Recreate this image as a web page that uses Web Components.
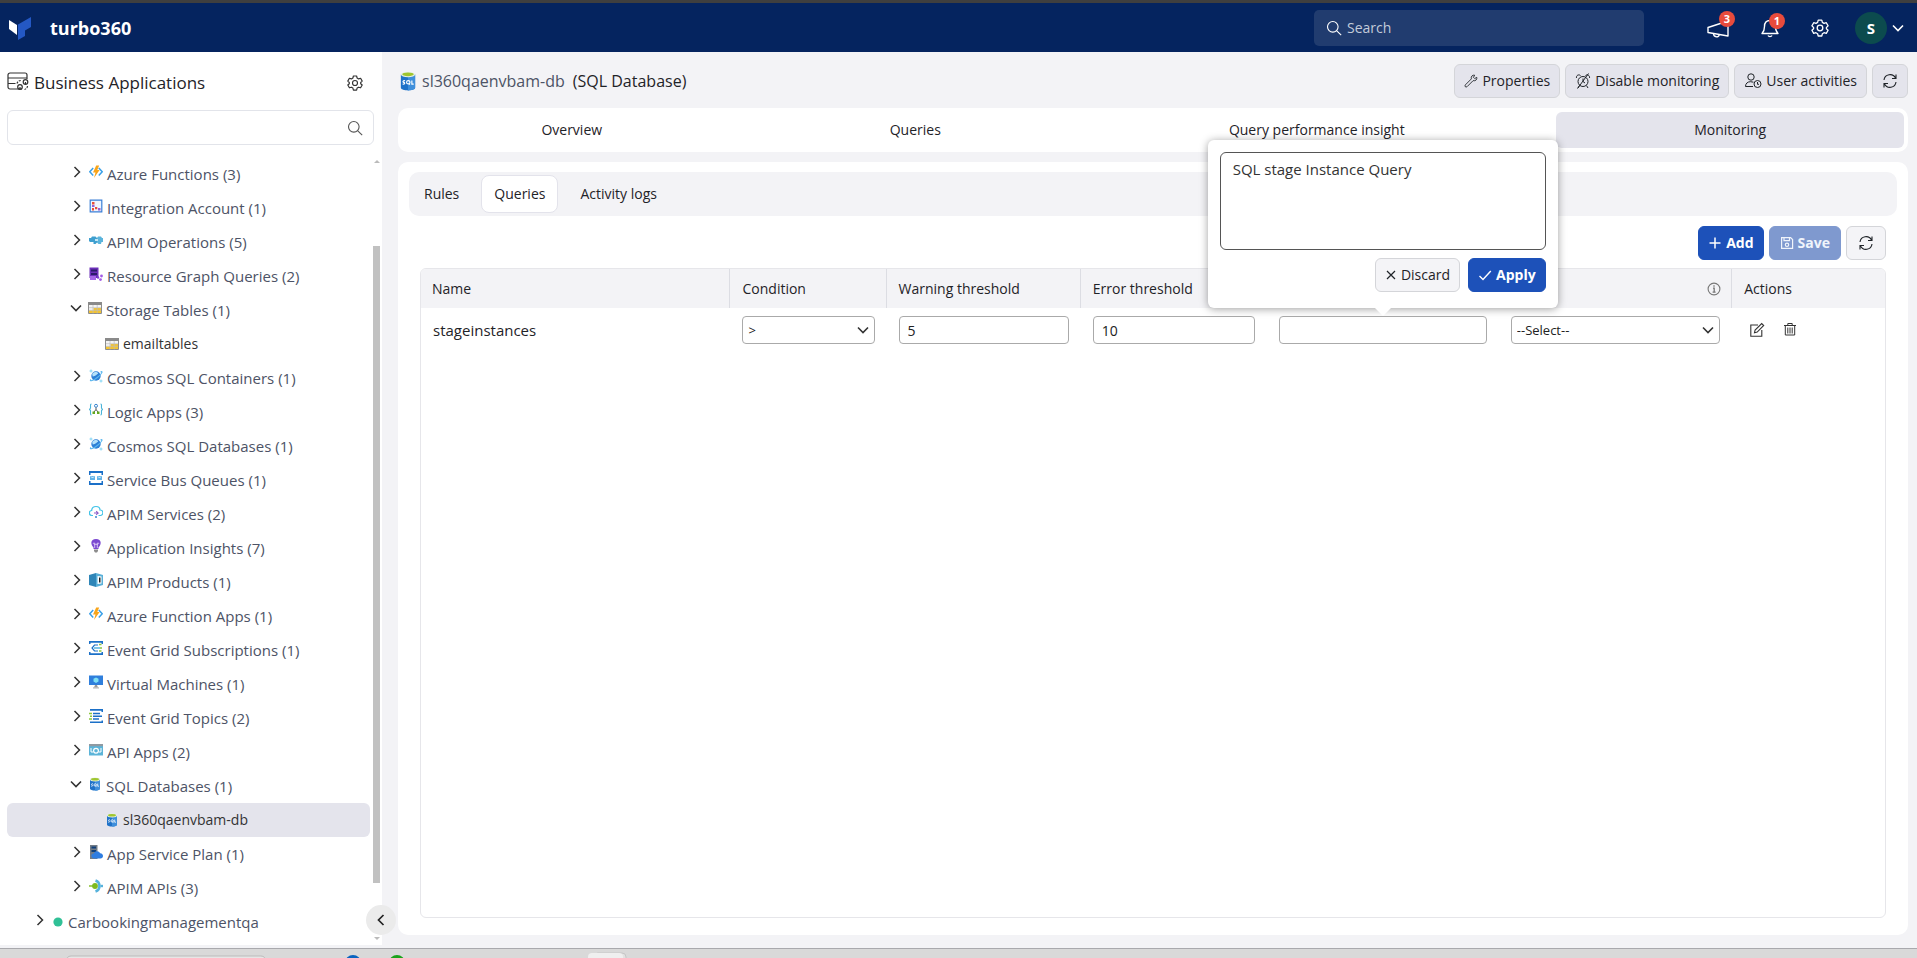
<!DOCTYPE html>
<html lang="en">
<head>
<meta charset="utf-8">
<title>turbo360 - Business Applications</title>
<style>
html, body { margin: 0; height: 100%; }
body { font-family: "Open Sans", "Noto Sans", sans-serif; font-size: 14px; line-height: 20px; color: #1f2328; background: #f3f3f6; overflow: hidden; }
</style>
</head>
<body>
<app-shell></app-shell>
<script>
const ICONS = {
  right: [16, '<path d="M5.5 3l5 5-5 5" fill="none" stroke="currentColor" stroke-width="1.5"/>'],
  down: [16, '<path d="M3 5.5l5 5 5-5" fill="none" stroke="currentColor" stroke-width="1.6"/>'],
  left: [16, '<path d="M10.5 3L5.5 8l5 5" fill="none" stroke="currentColor" stroke-width="1.7"/>'],
  search: [16, '<g fill="none" stroke="currentColor" stroke-width="1.1"><circle cx="6.8" cy="6.8" r="5.3"/><path d="M10.8 10.8l4.4 4.4"/></g>'],
  gear: [16, '<g fill="none" stroke="currentColor" stroke-width="1.15" stroke-linejoin="round"><path d="M6.4 1h3.2l.5 2 1.500.9 2-.6 1.600 2.800L13.700 7.500v1.200l1.500 1.300-1.600 2.800-2-.6-1.500.9-.5 2H6.400l-.5-2-1.500-.9-2 .6L.8 10l1.500-1.300V7.500L.8 6.100l1.600-2.800 2 .6L5.900 3z"/><circle cx="8" cy="8" r="2.500"/></g>'],
  apps: [22, '<g fill="none" stroke="#333" stroke-width="1.2"><path d="M15 17H3a2 2 0 0 1-2-2V3a2 2 0 0 1 2-2h15a2 2 0 0 1 2 2v4M1 6h19M1 11.500h7.500"/><circle cx="13" cy="15" r="2.300"/><circle cx="18.500" cy="10" r="2.300"/><path d="M10 11.500a4 4 0 0 1 4-3M20.500 14a4 4 0 0 1-3 3.500" stroke-dasharray="2 1"/><path d="M13 15v2M18.500 10v2" /></g>'],
  logo: [24, '<path d="M1 4l8 5v10L1 13z" fill="#fff"/><path d="M10 8.500L23 1v10l-6 3.500V20l-7 4z" fill="#2458c4"/>'],
  horn: [24, '<g fill="none" stroke="currentColor" stroke-width="1.400" stroke-linejoin="round"><path d="M2 11.500L22 5v15l-20-3.500z"/><path d="M7.500 17.500c0 4 5.500 4.500 5.800 1"/></g>'],
  bell: [20, '<g fill="none" stroke="currentColor" stroke-width="1.400" stroke-linejoin="round"><path d="M10 2.500c-4 0-5.500 3-5.500 6 0 4-1 5.500-2.500 7h16c-1.500-1.500-2.500-3-2.500-7 0-3-1.500-6-5.500-6z"/><path d="M8 17.500c.8 1.500 3.200 1.500 4 0"/></g>'],
  wrench: [16, '<path d="M14.600 3.800l-2.400 1.400-1.400-1.400L12.200 1.400C9.800.8 7.600 2.800 8.400 5.600L1.600 12.400c-1.400 1.600.4 3.400 2 2l6.800-6.800c2.800.8 4.800-1.400 4.200-3.800z" fill="none" stroke="currentColor" stroke-width="1"/>'],
  alarm: [16, '<g fill="none" stroke="currentColor" stroke-width="1"><circle cx="8" cy="8.500" r="5"/><path d="M8 5.500v3l2 1.500M4.500 12.500L3 15M11.500 12.500L13 15M1.500 5C1 2.500 3.500 1 5.500 2.500M14.500 5c.5-2.500-2-4-4-2.500M13.500.5l-11 15" /></g>'],
  user: [18, '<g fill="none" stroke="currentColor" stroke-width="1"><circle cx="7" cy="5" r="3.200"/><path d="M9 14.500H1.500c0-3 2-4.800 5-4.800l3 .5"/><circle cx="13.500" cy="12" r="3.500"/><path d="M13.500 10v2.300h1.500"/></g>'],
  refresh: [16, '<g fill="none" stroke="currentColor" stroke-width="1.100"><path d="M2 7a6.100 6.100 0 0 1 11.500-2M14 9a6.100 6.100 0 0 1-11.500 2M14 1.500v4h-4M2 14.500v-4h4"/></g>'],
  plus: [14, '<path d="M7 1.500v11M1.500 7h11" stroke="currentColor" stroke-width="1.500"/>'],
  save: [14, '<g fill="none" stroke="currentColor" stroke-width="1.200"><path d="M1.600 1.600h9l2 2v8.800h-11z"/><path d="M4 1.600v3h5.500v-3"/><circle cx="7" cy="8.800" r="1.700"/></g>'],
  close: [12, '<path d="M2 2l8 8M10 2l-8 8" stroke="currentColor" stroke-width="1.200"/>'],
  check: [14, '<path d="M1.500 8l3.500 3.500L12.800 3" fill="none" stroke="currentColor" stroke-width="1.400"/>'],
  info: [14, '<circle cx="7" cy="7" r="5.900" fill="none" stroke="#777" stroke-width="1.100"/><path d="M7 3.200v1.600M6 6.200h1.200v4M5.600 10.200h3" stroke="#777" stroke-width="1.300" fill="none"/>'],
  edit: [16, '<g fill="none" stroke="currentColor" stroke-width="1.100"><path d="M9 3H1.800v11.200h11V8"/><path d="M5.500 10.700l.6-2.700 6.600-6.500 2 2-6.500 6.600z"/></g>'],
  trash: [14, '<g fill="none" stroke="currentColor" stroke-width="1"><path d="M1 3.500h12M4.800 3.500v-2h4.400v2M2.300 3.500v9.500h9.400V3.500M4.800 5.500v6M7 5.500v6M9.200 5.500v6"/></g>'],
  sql: [14, '<path d="M2 2.500v9.300c0 2.400 10 2.400 10 0V2.500z" fill="#1f72c8"/><path d="M7 4v9.600c3 0 5-.8 5-1.800V2.500z" fill="#3f8fdb"/><ellipse cx="7" cy="2.500" rx="5" ry="1.900" fill="#e6f0e0"/><ellipse cx="7" cy="2.300" rx="4" ry="1.300" fill="#9fc52e"/><g fill="none" stroke="#fff" stroke-width=".8"><path d="M5 6.800c-1.600-.4-1.900.9-1 1.200 1.200.3.800 1.500-.8 1.100M9.700 6.600v2.600H11"/><circle cx="7.200" cy="7.900" r="1.200"/><path d="M7.500 8.600l.8 1"/></g>'],
  func: [14, '<path d="M4.200 3L.8 6.800l3.400 3.700M9.800 3l3.400 3.800-3.400 3.700" fill="none" stroke="#3aa0e8" stroke-width="1.500"/><path d="M7.200.5h3L8.300 5h2.300L5 13l1.500-5.500H4z" fill="#f9a51a"/>'],
  integ: [14, '<path d="M1.200 1.200h11.600v11.600H1.200z" fill="#eef5ff" stroke="#3b7fd6" stroke-width="1.200"/><path d="M3 3h2.500v2.500H3zM6 8h2.300v2.300H6zM3 9h2v2.500H3z" fill="#e8503a"/><path d="M3 6h2.500v2H3zM9 9h2.500v2.500H9z" fill="#9a5bd0"/>'],
  ops: [14, '<path d="M0 5h2l1-1.500h3.500L8 5v4.500L6.500 11h-2v-2H1L0 8z" fill="#3f9fcf"/><path d="M14 5h-1l-1-1.500H9L8 5v4.500L9.500 11H12l.5-2H14z" fill="#5bb4dc"/><path d="M6 6h3v2H6z" fill="#c3e5f3"/>'],
  graph: [14, '<path d="M.5.5h9v10.500h-9z" fill="#6b2fb8"/><path d="M2 2.500h6v2H2zM2 6h6v2H2z" fill="#2c1a6b"/><path d="M1 9h6v4H1z" fill="#a668e8"/><circle cx="12.500" cy="9" r="1.400" fill="#a35be6"/><circle cx="9" cy="10.500" r="1.200" fill="#7d3ccf"/><circle cx="11.500" cy="12.600" r="1.400" fill="#a35be6"/>'],
  table: [14, '<path d="M.5 1.500h13v11H.5z" fill="#f4f4f4" stroke="#8d8d8d"/><path d="M0 1h14v3H0z" fill="#8a8a8a"/><path d="M5.500 7h7.500v5H1V9.500h4.500z" fill="#f4c430"/><path d="M1 6.700h12M1 9.300h12M5 4v8.500M9.200 4v8.500" stroke="#bbb" stroke-width=".7"/>'],
  cosmos: [14, '<circle cx="7" cy="7" r="4.700" fill="#2d7fd6"/><path d="M3.200 5c2-2.500 5-2.500 6-.5-1.500 1-2.500 2.500-5.500 3z" fill="#b5e2fa"/><path d="M2 10.500C-.5 13 5 11.500 9 8S14.500 1.500 11.500 3" fill="none" stroke="#58b6ee" stroke-width="1.100"/><path d="M2 .5v3M.5 2h3M12 10.500v3M10.500 12h3" stroke="#7ad3f4" stroke-width=".9"/>'],
  logic: [14, '<path d="M2.500 1c-1.500 0-.8 2-1 4L.5 6.500l1 1c.2 2-.5 4.500 1 4.500M11.500 1c1.500 0 .8 2 1 4l1 1.500-1 1c-.2 2 .5 4.500-1 4.500" fill="none" stroke="#4ab3d8" stroke-width="1.100"/><circle cx="7" cy="2.800" r="1.500" fill="none" stroke="#3a86d0"/><path d="M7 4.500v2L5 9M7 6.500L9 9" fill="none" stroke="#444" stroke-width=".9"/><path d="M3.500 8.500h2.500v2.500H3.500zM8 8.500h2.500v2.500H8z" fill="#62a81e"/>'],
  bus: [14, '<path d="M0 0h14v4h-1.500V2h-11v2H0zM0 14h14v-4h-1.500v2h-11v-2H0z" fill="#1b70c8"/><path d="M1 5h5v4H1zM8 5h5v4H8z" fill="#63b4e8"/><path d="M2 5.500l1.500 1.500L5 5.500M9 5.500l1.500 1.500L12 5.500" fill="none" stroke="#fff" stroke-width=".8"/>'],
  cloud: [14, '<path d="M4 10.500H3a2.500 2.500 0 0 1-.3-5C2.800 3 4.500 1.500 7 1.500s4 1.500 4 3.500a2.700 2.700 0 0 1 .3 5.500H9.500" fill="none" stroke="#41c3e8" stroke-width="1.200"/><path d="M5 8h4L7.200 6.200M9 8l-1.800 2" fill="none" stroke="#8a5bc8" stroke-width="1.100"/><circle cx="7" cy="12" r="1" fill="#3a86d0"/>'],
  bulb: [14, '<path d="M7 0c6 0 5.500 5.500 2.500 8.500V10h-5V8.500C1.500 5.500 1 0 7 0z" fill="#7b48d0"/><path d="M5 3.500c-1.500 1 0 2 .8 1.500M9 3.500c1.500 1 0 2-.8 1.500M5.700 4v5M8.300 4v5M5.700 5.300h2.600" stroke="#e8dafa" fill="none" stroke-width=".8"/><path d="M5 10.500h4V12L8 13.500H6L5 12z" fill="#8c8c8c"/>'],
  product: [14, '<path d="M0 2l7-2v14L0 12z" fill="#2f86b8"/><path d="M7 0l7 2v10l-7 2z" fill="#5ab0d8"/><path d="M8.500 3l4 .5v7l-4 .5z" fill="#fff"/><path d="M10 4.500h1.500v5H10z" fill="#222"/>'],
  grid: [14, '<path d="M0 0h14v3h-1.500V1.700h-11V3H0zM0 14h14v-3h-1.500v1.300h-11V11H0z" fill="#1b70c8"/><path d="M9 4H5.500L3 7l2.500 3H9" fill="none" stroke="#1b70c8" stroke-width="1.200"/><path d="M5 7h6" stroke="#2ba0d8" stroke-width="1.200"/><path d="M10 3.500h2.500M11 7h2M10 10h2.500" stroke="#8cc63f" stroke-width="1.400"/>'],
  vm: [14, '<path d="M0 .5h14V10H0z" fill="#2f7fdc"/><path d="M7 2.500l2.500 1.300v2.700L7 8 4.500 6.500V3.800z" fill="#7fe0f4"/><path d="M6 10h2l1 2.500H5z" fill="#9a9a9a"/><path d="M4 12.300h6v1.200H4z" fill="#b5b5b5"/>'],
  topic: [14, '<path d="M1 0h13v3h-1.500V1.700H1zM1 14h13v-2.500h-1.500v1H1z" fill="#1b70c8"/><path d="M4 4.500h7M4 7.200h9M4 10h6" stroke="#1b70c8" stroke-width="1.400"/><path d="M0 4.500h3M1 7.200h2M0 10h3" stroke="#8cc63f" stroke-width="1.400"/>'],
  api: [14, '<path d="M0 1h14v11.500H0z" fill="#5cb4d8"/><path d="M0 1h14v2.200H0z" fill="#8f9aa2"/><circle cx="7" cy="7.800" r="2.400" fill="none" stroke="#fff" stroke-width="1.200"/><path d="M2 5v4h2M12 5v4h-2" fill="none" stroke="#fff"/>'],
  plan: [14, '<path d="M1 0h7.500v14H1z" fill="#737c86"/><path d="M2.500 1.500H7v2H2.500zM2.500 5H7v2H2.500z" fill="#0f3f7a"/><path d="M5 13.500a2.500 2.500 0 0 1-.2-5 3.500 3.500 0 0 1 6.400-.2c2 .2 2.800 1.500 2.800 2.700 0 1.300-1 2.500-2.500 2.500z" fill="#2f7de0"/>'],
  apis: [14, '<path d="M6.500 1.500a5.800 5.800 0 0 1 0 11" fill="none" stroke="#56b2dc" stroke-width="2.600"/><path d="M11.500 5.800H14v2.400h-2.500z" fill="#56b2dc"/><circle cx="6" cy="7" r="2.900" fill="#7fba1e"/><path d="M0 6.300h4v1.400H0z" fill="#7fba1e"/>'],
  dot: [14, '<circle cx="7" cy="7" r="4.600" fill="#30c096"/>'],
};

function define(name, markup) {
  const template = document.createElement('template');
  customElements.define(name, class extends HTMLElement {
    connectedCallback() {
      if (this.shadowRoot) return;
      template.innerHTML = typeof markup === 'function' ? markup(this) : markup;
      this.attachShadow({ mode: 'open' }).append(template.content.cloneNode(true));
    }
  });
}

define('ui-icon', el => {
  const [box, body] = ICONS[el.getAttribute('name')];
  const size = el.getAttribute('size') || box;
  return `<style>:host{display:inline-flex;flex:none;width:${size}px;height:${size}px}svg{display:block;width:100%;height:100%}</style>
  <svg viewBox="0 0 ${box} ${box}" aria-hidden="true">${body}</svg>`;
});

define('ui-button', el => `
<style>
:host { display: inline-flex; }
button { box-sizing: border-box; height: 34px; display: flex; align-items: center; gap: 4px; padding: 0 9px; border: 1px solid #d4d5d9; border-radius: 6px; background: #e4e4ec; color: #1f2328; font: 500 14px/20px "Open Sans", "Noto Sans", sans-serif; white-space: nowrap; }
:host([kind=primary]) button { background: #1d51b9; border-color: #1d51b9; color: #fff; font-weight: 700; }
:host([kind=muted]) button { background: #7f99cf; border-color: #7f99cf; color: #f0f4fb; font-weight: 700; padding: 0 10px; }
:host([kind=light]) button { background: #f4f4f7; }
:host([kind=light][label]) button { padding: 0 11px; }
</style>
<button type="button" ${el.getAttribute('label') ? `aria-label="${el.getAttribute('label')}"` : ''} ${el.getAttribute('kind') === 'muted' ? 'aria-disabled="true"' : ''}><ui-icon name="${el.getAttribute('icon')}" ${el.hasAttribute('size') ? `size="${el.getAttribute('size')}"` : ''}></ui-icon><slot></slot></button>`);

define('top-bar', `
<style>
:host { display: flex; align-items: center; height: 49px; flex: none; box-sizing: border-box; padding: 0 11px 0 8px; background: #05245f; color: #fff; }
.brand { display: flex; align-items: center; gap: 18px; font-weight: 700; font-size: 18px; line-height: 24px; color: #fff; text-decoration: none; }
.search { margin-left: auto; margin-right: 62px; box-sizing: border-box; width: 330px; height: 36px; display: flex; align-items: center; gap: 5px; padding: 0 12px; border-radius: 5px; background: #213c6f; }
input { flex: 1; min-width: 0; border: 0; outline: 0; padding: 0; background: none; color: #fff; font: 14px/20px "Open Sans", sans-serif; }
input::placeholder { color: #c3cbda; opacity: 1; }
nav { display: flex; align-items: center; }
button { border: 0; padding: 0; background: none; color: #fff; display: flex; align-items: center; position: relative; font: 500 15px/20px "Open Sans", sans-serif; }
.bell { margin-left: 30px; } .set { margin-left: 31px; } .me { margin-left: 26px; gap: 3px; }
.badge { position: absolute; top: -5px; right: -5px; width: 16px; height: 16px; border-radius: 8px; background: #e84b3c; font-size: 11px; font-weight: 700; line-height: 16px; text-align: center; }
.avatar { width: 32px; height: 32px; border-radius: 16px; background: #0c4b4e; line-height: 32px; text-align: center; font-weight: 700; }
</style>
<a class="brand" href="#"><ui-icon name="logo"></ui-icon><span>turbo360</span></a>
<label class="search"><ui-icon name="search"></ui-icon><input type="text" placeholder="Search" aria-label="Search"></label>
<nav>
<button type="button" aria-label="Announcements"><ui-icon name="horn"></ui-icon><span class="badge">3</span></button>
<button type="button" class="bell" aria-label="Notifications"><ui-icon name="bell"></ui-icon><span class="badge">1</span></button>
<button type="button" class="set" aria-label="Settings"><ui-icon name="gear" size="18"></ui-icon></button>
<button type="button" class="me" aria-label="Account"><span class="avatar">S</span><ui-icon name="down"></ui-icon></button>
</nav>`);

define('tree-row', el => {
  const kind = el.getAttribute('kind') || 'group';
  const chevron = kind === 'leaf' ? '' : `<ui-icon name="${el.hasAttribute('open') ? 'down' : 'right'}"></ui-icon>`;
  return `
<style>
:host { display: block; }
a { box-sizing: border-box; height: 34px; display: flex; align-items: center; gap: 4px; padding-left: 62px; border-radius: 6px; color: #4d5366; text-decoration: none; font-size: 15px; line-height: 20px; white-space: nowrap; }
ui-icon { margin-bottom: 4px; }
ui-icon:first-child { color: #333; }
:host([open]) a { padding-left: 61px; }
:host([kind=root]) a { padding-left: 25px; gap: 3px; }
:host([kind=leaf]) a { padding-left: 98px; color: #333; font-size: 14px; }
:host([kind=leaf]) ui-icon, ui-icon[name=dot] { margin-bottom: 0; }
:host([selected]) a { background: #e4e4ec; }
</style>
<a href="#" role="treeitem" ${el.hasAttribute('selected') ? 'aria-selected="true"' : ''}>${chevron}<ui-icon name="${el.getAttribute('icon')}"></ui-icon><slot></slot></a>`;
});

define('side-bar', `
<style>
:host { display: flex; flex-direction: column; box-sizing: border-box; width: 382px; flex: none; min-height: 0; background: #fff; padding: 12px 2px 0 7px; position: relative; }
header { display: flex; align-items: center; height: 38px; gap: 5px; padding-right: 17px; }
h1 { margin: 0; flex: 1; font-size: 17px; line-height: 24px; font-weight: 500; }
button { border: 0; padding: 0; background: none; display: flex; color: #333; }
.find { box-sizing: border-box; display: flex; align-items: center; height: 35px; margin: 8px 6px 0 0; padding: 0 10px; border: 1px solid #e2e4ea; border-radius: 6px; color: #555; }
input { flex: 1; min-width: 0; border: 0; outline: 0; background: none; font: 14px/20px "Open Sans", sans-serif; }
.body { display: flex; flex: 1; min-height: 0; margin-top: 12px; }
.tree { flex: 1; min-width: 0; overflow: hidden; }
.bar { width: 7px; margin-left: 3px; display: flex; flex-direction: column; align-items: center; }
.up, .dn { border: 3px solid transparent; }
.up { border-bottom-color: #bbb; border-top: 0; margin-top: 3px; } .dn { border-top-color: #bbb; border-bottom: 0; margin: 0 0 5px; }
.rail { flex: 1; align-self: stretch; display: flex; flex-direction: column; padding: 83px 0 54px; }
.thumb { flex: 1; background: #c1c1c1; }
.fold { position: absolute; right: -14px; bottom: 10px; width: 30px; height: 30px; border-radius: 15px; background: #ebebeb; align-items: center; justify-content: center; z-index: 2; color: #222; }
</style>
<header><ui-icon name="apps"></ui-icon><h1>Business Applications</h1><button type="button" aria-label="Settings"><ui-icon name="gear"></ui-icon></button></header>
<label class="find"><input type="text" aria-label="Search applications"><ui-icon name="search"></ui-icon></label>
<div class="body">
<div class="tree" role="tree">
<tree-row icon="func">Azure Functions (3)</tree-row>
<tree-row icon="integ">Integration Account (1)</tree-row>
<tree-row icon="ops">APIM Operations (5)</tree-row>
<tree-row icon="graph">Resource Graph Queries (2)</tree-row>
<tree-row icon="table" open>Storage Tables (1)</tree-row>
<tree-row icon="table" kind="leaf">emailtables</tree-row>
<tree-row icon="cosmos">Cosmos SQL Containers (1)</tree-row>
<tree-row icon="logic">Logic Apps (3)</tree-row>
<tree-row icon="cosmos">Cosmos SQL Databases (1)</tree-row>
<tree-row icon="bus">Service Bus Queues (1)</tree-row>
<tree-row icon="cloud">APIM Services (2)</tree-row>
<tree-row icon="bulb">Application Insights (7)</tree-row>
<tree-row icon="product">APIM Products (1)</tree-row>
<tree-row icon="func">Azure Function Apps (1)</tree-row>
<tree-row icon="grid">Event Grid Subscriptions (1)</tree-row>
<tree-row icon="vm">Virtual Machines (1)</tree-row>
<tree-row icon="topic">Event Grid Topics (2)</tree-row>
<tree-row icon="api">API Apps (2)</tree-row>
<tree-row icon="sql" open>SQL Databases (1)</tree-row>
<tree-row icon="sql" kind="leaf" selected>sl360qaenvbam-db</tree-row>
<tree-row icon="plan">App Service Plan (1)</tree-row>
<tree-row icon="apis">APIM APIs (3)</tree-row>
<tree-row icon="dot" kind="root">Carbookingmanagementqa</tree-row>
</div>
<div class="bar"><i class="up"></i><div class="rail"><div class="thumb"></div></div><i class="dn"></i></div>
</div>
<button type="button" class="fold" aria-label="Collapse"><ui-icon name="left"></ui-icon></button>`);

define('page-title', `
<style>
:host { display: flex; align-items: center; height: 34px; gap: 5px; }
h2 { display: flex; align-items: center; gap: 8px; margin: 0; flex: 1; font-size: 16px; line-height: 24px; font-weight: 500; }
a { color: #4d5366; text-decoration: none; font-weight: 400; }
h2 ui-icon { margin-right: -4px; }
</style>
<h2><ui-icon name="sql" size="20"></ui-icon><a href="#">sl360qaenvbam-db</a><span>(SQL Database)</span></h2>
<ui-button icon="wrench" size="14">Properties</ui-button>
<ui-button icon="alarm">Disable monitoring</ui-button>
<ui-button icon="user">User activities</ui-button>
<ui-button icon="refresh" label="Refresh"></ui-button>`);

define('main-tabs', `
<style>
:host { display: grid; grid-template-columns: 340fr 340fr 464fr 348fr; gap: 4px; height: 44px; box-sizing: border-box; padding: 4px; border-radius: 10px; background: #fff; }
button { border: 0; padding: 0; border-radius: 6px; background: none; color: #1f2328; font: 500 14px/20px "Open Sans", sans-serif; }
.wide { padding-right: 8px; }
[aria-selected=true] { background: #e4e4ec; }
</style>
<button type="button" role="tab">Overview</button><button type="button" role="tab">Queries</button><button type="button" role="tab" class="wide">Query performance insight</button><button type="button" role="tab" aria-selected="true">Monitoring</button>`);

define('sub-tabs', `
<style>
:host { display: flex; align-items: center; gap: 9px; height: 44px; box-sizing: border-box; padding: 0 2px; border-radius: 10px; background: #f3f3f6; }
button { height: 38px; padding: 0 12px; border: 1px solid transparent; border-radius: 8px; background: none; color: #1f2328; font: 500 14px/20px "Open Sans", sans-serif; }
[aria-selected] { background: #fff; border-color: #e3e3eb; }
</style>
<button type="button" role="tab">Rules</button><button type="button" role="tab" aria-selected="true">Queries</button><button type="button" role="tab">Activity logs</button>`);

define('note-popover', `
<style>
:host { display: block; box-sizing: border-box; width: 350px; height: 168px; padding: 12px; border-radius: 6px; background: #fff; box-shadow: 0 1px 8px rgba(0,0,0,.38); }
textarea { display: block; box-sizing: border-box; width: 100%; height: 98px; resize: none; padding: 6px 12px; border: 1px solid #555; border-radius: 6px; outline: 0; background: #fff; color: #333; font: 15px/20px "Open Sans", sans-serif; }
.row { display: flex; justify-content: flex-end; gap: 8px; margin-top: 8px; }
.tip { position: absolute; left: 50%; bottom: -8px; margin-left: -8px; border: 8px solid transparent; border-top-color: #fff; border-bottom: 0; }
</style>
<textarea aria-label="Description">SQL stage Instance Query</textarea>
<div class="row"><ui-button kind="light" icon="close">Discard</ui-button><ui-button kind="primary" icon="check">Apply</ui-button></div>
<i class="tip"></i>`);

define('query-table', `
<style>
:host { display: flex; flex-direction: column; flex: 1; border: 1px solid #e6e6ea; border-radius: 6px; }
table { width: 100%; table-layout: fixed; border-collapse: separate; border-spacing: 0; }
th { box-sizing: border-box; height: 39px; padding: 0 12px; border-right: 1px solid #dcdde3; background: #f3f3f6; text-align: left; font-weight: 500; white-space: nowrap; }
th:first-child { padding-left: 11px; border-top-left-radius: 5px; } th:last-child { border-right: 0; border-top-right-radius: 5px; }
.hint { padding-right: 10px; }
.hint ui-icon { display: flex; margin-left: auto; }
td { height: 44px; padding: 0 12px; position: relative; }
td:first-child { font-size: 15px; }
input, select { display: block; box-sizing: border-box; width: 100%; height: 28px; margin: 0; border: 1px solid #aaa; border-radius: 4px; background: #fff; color: #222; outline: 0; padding: 0 8px; font: 14px/20px "Open Sans", sans-serif; }
select { appearance: none; padding: 0 5px; font-size: 13px; }
.sel { position: relative; display: block; }
.sel ui-icon { position: absolute; right: 4px; top: 6px; color: #333; pointer-events: none; }
.acts { display: flex; gap: 18px; padding-left: 5px; }
.acts button { border: 0; padding: 0; background: none; color: #333; display: flex; }
note-popover { position: absolute; left: 50%; margin-left: -175px; bottom: 44px; z-index: 5; }
</style>
<table>
<colgroup><col style="width:21.14%"><col style="width:10.66%"><col style="width:13.27%"><col style="width:12.69%"><col style="width:15.86%"><col style="width:15.94%"><col></colgroup>
<thead><tr><th>Name</th><th>Condition</th><th>Warning threshold</th><th>Error threshold</th><th aria-label="Description"></th><th class="hint" aria-label="Labels"><ui-icon name="info"></ui-icon></th><th>Actions</th></tr></thead>
<tbody><tr>
<td>stageinstances</td>
<td><span class="sel"><select aria-label="Condition"><option>&gt;</option></select><ui-icon name="down"></ui-icon></span></td>
<td><input type="text" aria-label="Warning threshold" value="5"></td>
<td><input type="text" aria-label="Error threshold" value="10"></td>
<td><input type="text" aria-label="Description"><note-popover></note-popover></td>
<td><span class="sel"><select aria-label="Label"><option>--Select--</option></select><ui-icon name="down"></ui-icon></span></td>
<td><div class="acts"><button type="button" aria-label="Edit"><ui-icon name="edit"></ui-icon></button><button type="button" aria-label="Delete"><ui-icon name="trash"></ui-icon></button></div></td>
</tr></tbody>
</table>`);

define('query-panel', `
<style>
:host { display: flex; flex-direction: column; flex: 1; min-height: 0; box-sizing: border-box; margin-top: 10px; padding: 10px 11px 17px; border-radius: 10px; background: #fff; }
.tools { display: flex; justify-content: flex-end; gap: 5px; margin: 10px 11px 8px; }
query-table { margin: 0 11px; }
</style>
<sub-tabs role="tablist"></sub-tabs>
<div class="tools"><ui-button kind="primary" icon="plus">Add</ui-button><ui-button kind="muted" icon="save">Save</ui-button><ui-button kind="light" icon="refresh" label="Refresh"></ui-button></div>
<query-table></query-table>`);

define('task-strip', `
<style>
:host { display: block; height: 10px; flex: none; box-sizing: border-box; border-top: 1px solid #a9a9ad; background: #d9d9d9; overflow: hidden; }
svg { display: block; }
</style>
<svg width="640" height="9" aria-hidden="true"><rect x="66" y="7" width="200" height="20" rx="5" fill="#e6e6e6" stroke="#bbb"/><circle cx="353" cy="14" r="8" fill="#0a64c0"/><circle cx="397" cy="14" r="8" fill="#1ba31b"/><rect x="594" y="4" width="32" height="20" rx="4" fill="#e2e2e2" stroke="#c6c6c6"/><rect x="588" y="4" width="35" height="20" rx="4" fill="#efefef"/></svg>`);

define('app-shell', `
<style>
:host { display: flex; flex-direction: column; height: 100vh; }
.edge { height: 3px; flex: none; background: #3f3f3f; }
.work { display: flex; flex: 1; min-height: 0; padding-bottom: 3px; }
main { flex: 1; min-width: 0; display: flex; flex-direction: column; padding: 12px 9px 10px 16px; }
main-tabs { margin-top: 10px; }
</style>
<div class="edge"></div>
<top-bar></top-bar>
<div class="work"><side-bar></side-bar>
<main><page-title></page-title><main-tabs role="tablist"></main-tabs><query-panel></query-panel></main></div>
<task-strip></task-strip>`);
</script>
</body>
</html>
